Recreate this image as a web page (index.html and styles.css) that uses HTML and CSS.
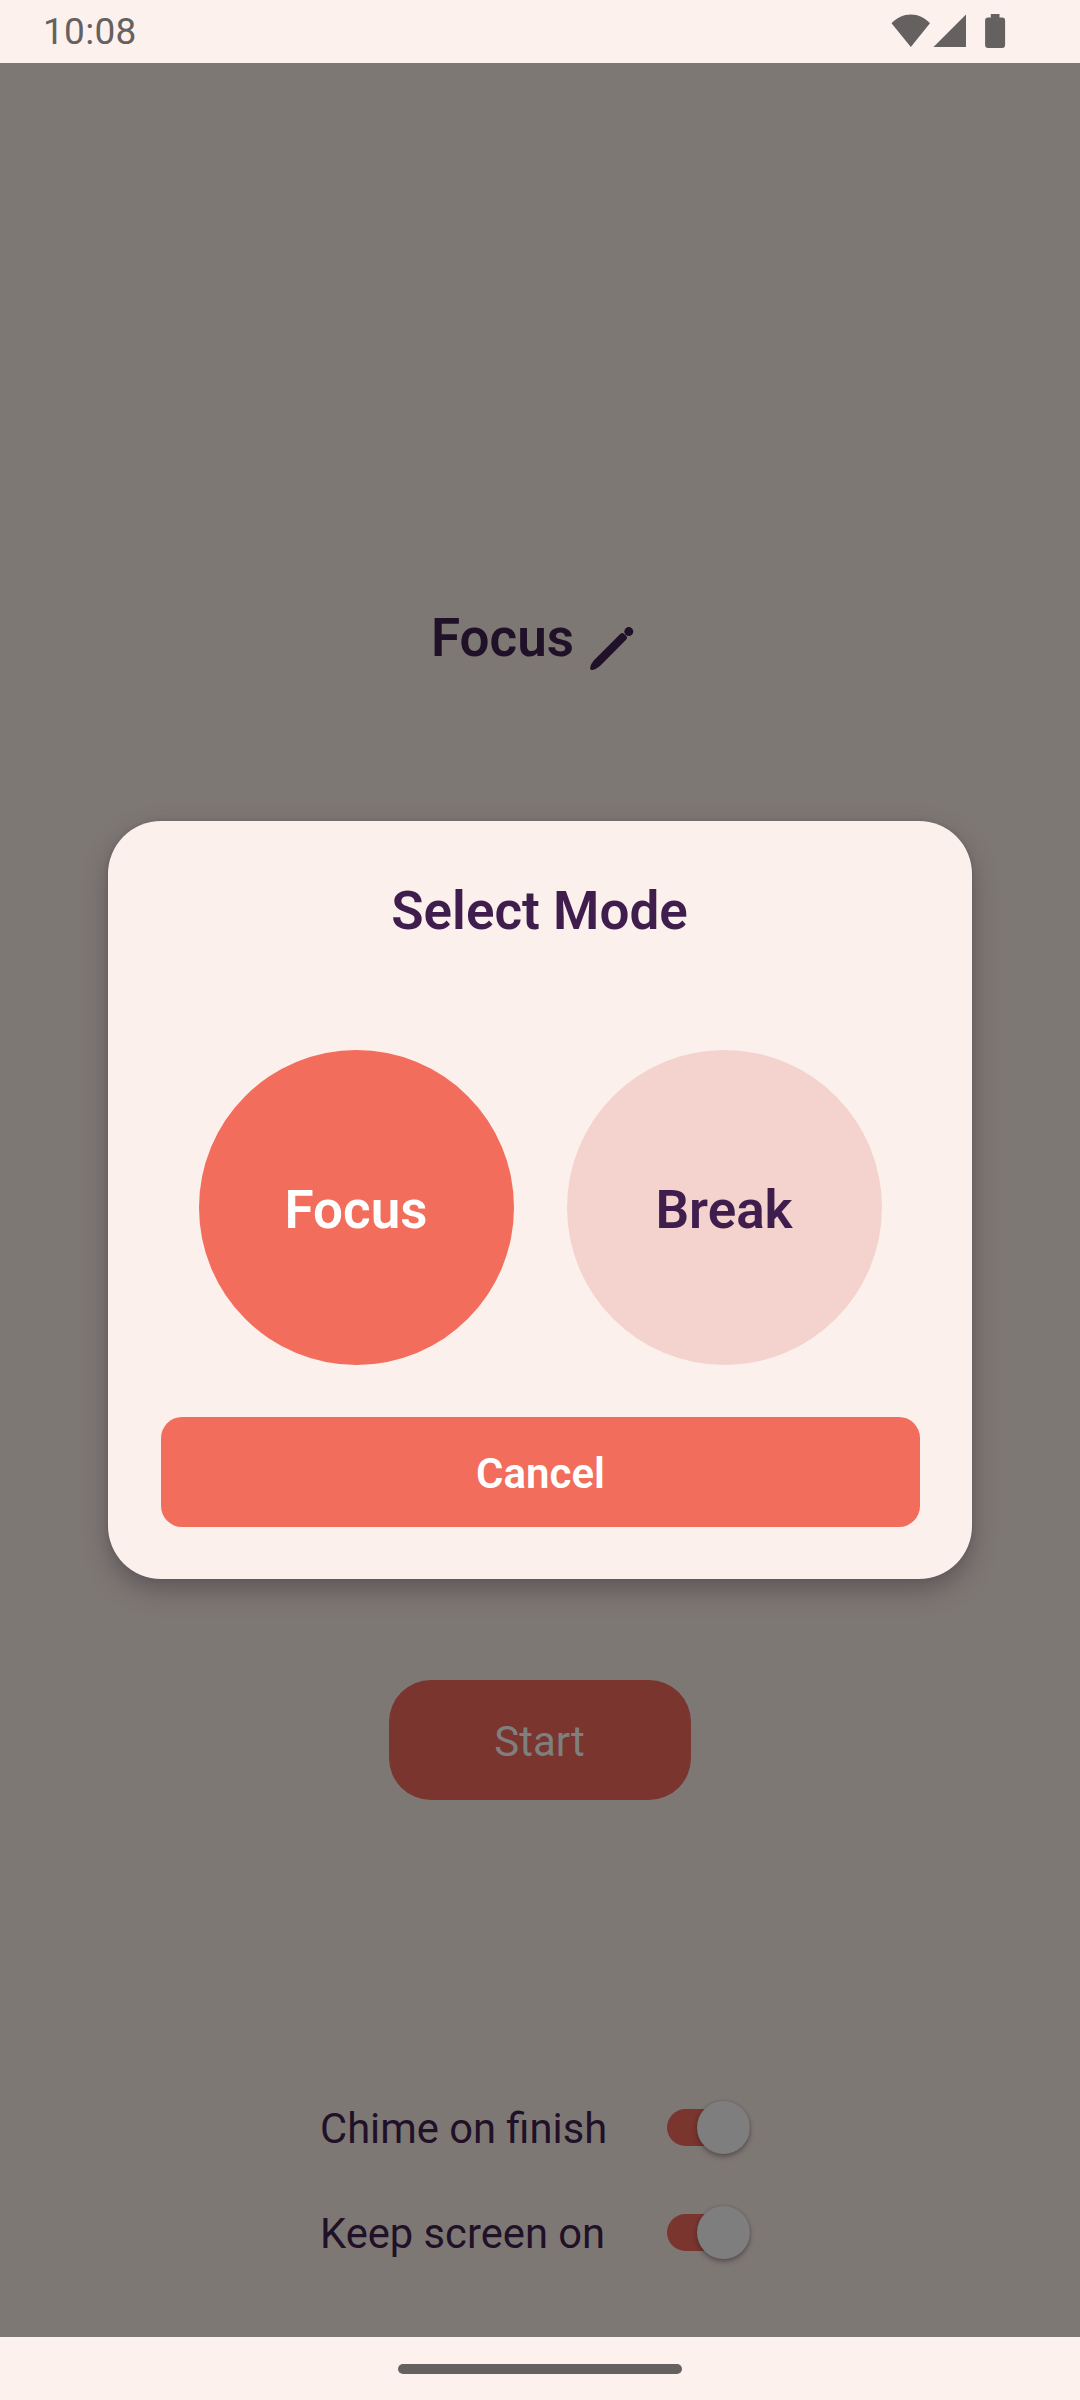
FILE: index.html
```html
<!DOCTYPE html>
<html lang="en">
<head>
<meta charset="utf-8">
<title>Focus timer</title>
<link rel="stylesheet" href="styles.css">
</head>
<body>
<div class="phone">
  <header class="status">
    <span class="clock">10:08</span>
    <svg class="status-icons" width="116" height="36" viewBox="0 0 116 36">
      <path d="M0.5 9.3C6 3.500 12.500 0.500 19.800 0.500S33.500 3.500 39 9.300L19.800 33Z"/>
      <path d="M75 0.500V33H42.500Z"/>
      <path d="M99.800 0h8.700v3.400h2.600a3 3 0 0 1 3 3V31a3 3 0 0 1-3 3H97.100a3 3 0 0 1-3-3V6.400a3 3 0 0 1 3-3h2.700z"/>
    </svg>
  </header>

  <main class="screen">
    <div class="mode">
      <h1 class="mode-name">Focus</h1>
      <svg class="pencil" width="44" height="44" viewBox="0 0 44 44">
        <circle cx="38.800" cy="4.600" r="4.500"/>
        <path d="M30 7.300Q32.300 5 34.200 7L36.300 9.100Q38 10.800 35.800 13L10 39Q6.500 42 2.500 43Q-0.200 43.500 0.200 40.500Q1 36.500 4 33.300Z"/>
      </svg>
    </div>
    <button class="start">Start</button>
    <div class="options">
      <div class="option"><span class="label">Chime on finish</span><span class="switch"><span class="thumb"></span></span></div>
      <div class="option"><span class="label">Keep screen on</span><span class="switch"><span class="thumb"></span></span></div>
    </div>
  </main>

  <footer class="nav"><span class="handle"></span></footer>

  <section class="dialog">
    <h2 class="dialog-title">Select Mode</h2>
    <div class="choices">
      <button class="choice selected">Focus</button>
      <button class="choice">Break</button>
    </div>
    <button class="cancel">Cancel</button>
  </section>
</div>
</body>
</html>
```
FILE: styles.css
```css
* { box-sizing: border-box; }

body {
  margin: 0;
  font-family: Roboto, "Liberation Sans", sans-serif;
}

h1, h2 { margin: 0; font-weight: 600; }

button {
  display: block;
  border: 0;
  padding: 0;
  font-family: inherit;
}

.phone {
  position: relative;
  display: flex;
  flex-direction: column;
  width: 1080px;
  height: 2400px;
  overflow: hidden;
  background: #7e7875;
}

.status {
  display: flex;
  align-items: flex-start;
  justify-content: space-between;
  height: 63px;
  padding: 14px 73px 0 43px;
  background: #fdf1ee;
}

.clock {
  font-size: 37px;
  line-height: 35px;
  letter-spacing: 0.3px;
  color: #656160;
}

.status-icons { fill: #656160; }

.screen {
  flex: 1;
  display: flex;
  flex-direction: column;
  align-items: center;
}

.mode {
  display: flex;
  width: 218px;
  height: 70px;
  margin-top: 540px;
}

.mode-name {
  width: 159px;
  font-size: 53px;
  line-height: 70px;
  color: #201028;
}

.pencil { margin-top: 24px; fill: #201028; }

.start {
  width: 302px;
  height: 120px;
  margin-top: 1007px;
  padding: 3px 1px 0 0;
  border-radius: 42px;
  background: #79352e;
  font-size: 42px;
  color: #7f7f7f;
}

.options {
  display: flex;
  flex-direction: column;
  gap: 52px;
  width: 440px;
  margin-top: 301px;
}

.option {
  display: flex;
  justify-content: space-between;
  height: 53px;
}

.label {
  padding-top: 1px;
  font-size: 41.7px;
  line-height: 53px;
  color: #201028;
}

.switch {
  display: flex;
  align-items: center;
  width: 83px;
  height: 37px;
  margin: 8px 10px 0 0;
  justify-content: flex-end;
  border-radius: 19px;
  background: #79352e;
}

.thumb {
  flex: none;
  width: 53px;
  height: 53px;
  border-radius: 50%;
  background: #7e7e7e;
  box-shadow: 0 3px 5px rgba(45, 30, 35, 0.4), 0 0 3px rgba(45, 30, 35, 0.2);
}

.nav {
  display: flex;
  justify-content: center;
  height: 63px;
  padding-top: 27px;
  background: #fdf1ee;
}

.handle {
  width: 284px;
  height: 10px;
  border-radius: 5px;
  background: #656160;
}

.dialog {
  position: absolute;
  top: 821px;
  left: 108px;
  display: flex;
  flex-direction: column;
  align-items: center;
  width: 864px;
  height: 758px;
  padding-top: 55px;
  border-radius: 53px;
  background: #fcf0ed;
  box-shadow: 0 11px 26px rgba(50, 38, 48, 0.4), 0 0 4px rgba(50, 38, 48, 0.15);
}

.dialog-title {
  padding-right: 1px;
  font-size: 53px;
  line-height: 70px;
  color: #3f1e4e;
}

.choices {
  display: flex;
  gap: 53px;
  margin-top: 104px;
}

.choice {
  width: 315px;
  height: 315px;
  padding-top: 5px;
  border-radius: 50%;
  background: #f4d3ce;
  font-size: 53px;
  font-weight: 600;
  color: #3f1e4e;
}

.choice.selected { background: #f26d5b; color: #fff; }

.cancel {
  width: 759px;
  height: 110px;
  margin-top: 52px;
  padding: 3px 0 0 1px;
  border-radius: 21px;
  background: #f26d5b;
  font-size: 42px;
  font-weight: 600;
  color: #fff;
}
```
